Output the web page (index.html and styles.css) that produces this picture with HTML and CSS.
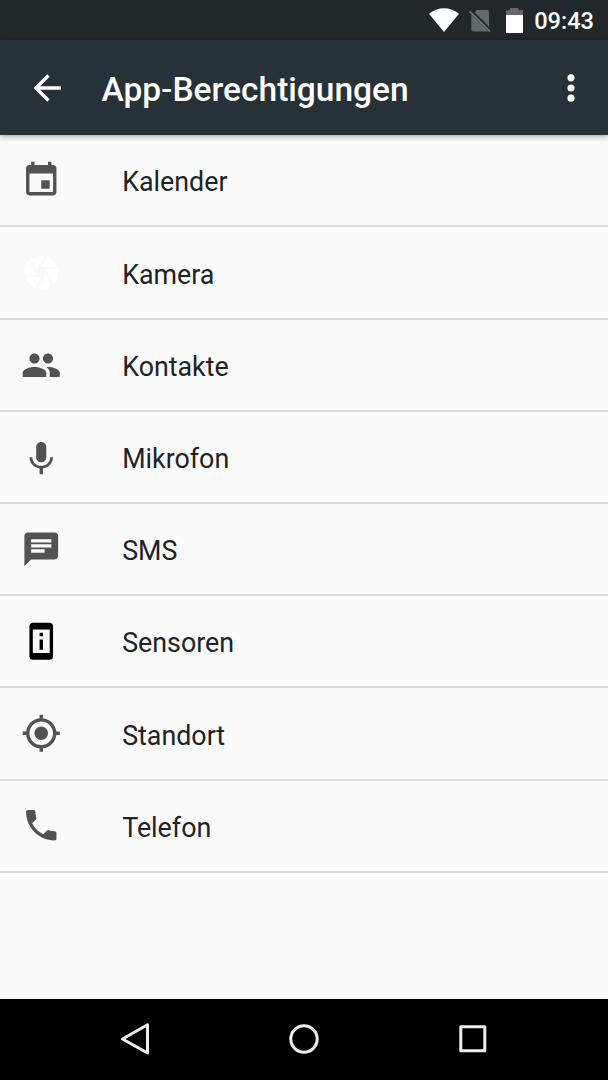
FILE: index.html
```html
<!DOCTYPE html>
<html lang="de">
<head>
  <meta charset="UTF-8">
  <title>App-Berechtigungen</title>
  <link rel="stylesheet" href="styles.css">
</head>
<body>
  <div class="statusbar">
    <svg class="wifi" width="30" height="24" viewBox="0 0 30 24"><path d="M0 5.8C8.500-1.700 21.500-1.700 30 5.800L15 24z"/></svg>
    <svg class="sim" width="22" height="24" viewBox="0 0 22 24">
      <path d="M7.500 1H17.800Q20 1 20 3.200V17.700L5.800 3.500zM2.300 5.500L19 22.200Q18.500 22.500 17.800 22.500H4.500Q2.300 22.500 2.300 20.300z"/>
      <path d="M.7 2.300L21 22.700" class="slash"/>
    </svg>
    <svg class="battery" width="17" height="25" viewBox="0 0 17 25">
      <path d="M0 2.200h4V0h8.500v2.200H17V8H0z" class="empty"/>
      <path d="M0 7h17v18H0z"/>
    </svg>
    <span class="clock">09:43</span>
  </div>

  <header class="toolbar">
    <svg class="back" width="28" height="28" viewBox="0 0 28 28"><path d="M27 14H2.500M14.500 1.500L2 14l12.500 12.500"/></svg>
    <h1>App-Berechtigungen</h1>
    <svg class="more" width="8" height="28" viewBox="0 0 8 28"><circle cx="4" cy="3.800" r="3.600"/><circle cx="4" cy="14" r="3.600"/><circle cx="4" cy="24.200" r="3.600"/></svg>
  </header>

  <ul class="permissions">
    <li>
      <svg class="icon" viewBox="0 0 24 24"><path d="M17 12h-5v5h5v-5zM16 1v2H8V1H6v2H5c-1.110 0-1.990.9-1.990 2L3 19c0 1.100.89 2 2 2h14c1.100 0 2-.9 2-2V5c0-1.100-.9-2-2-2h-1V1h-2zm3 18H5V8h14v11z"/></svg>
      <span>Kalender</span>
    </li>
    <li>
      <svg class="icon light" viewBox="0 0 24 24"><path d="M9.400 10.500l4.770-8.260C13.470 2.090 12.750 2 12 2c-2.400 0-4.600.85-6.320 2.250l3.660 6.350.06-.1zM21.540 9c-.92-2.920-3.150-5.260-6-6.340L11.880 9h9.660zm.26 1h-7.490l.29.5 4.760 8.250C21 16.970 22 14.610 22 12c0-.69-.07-1.350-.2-2zM8.540 12l-3.900-6.750C3.010 7.030 2 9.390 2 12c0 .69.07 1.350.2 2h7.490l-1.150-2zm-6.080 3c.92 2.920 3.150 5.260 6 6.340L12.120 15H2.460zm11.270 0l-3.900 6.760c.7.15 1.420.24 2.170.24 2.400 0 4.600-.85 6.320-2.250l-3.660-6.350-.93 1.600z"/></svg>
      <span>Kamera</span>
    </li>
    <li>
      <svg class="icon" viewBox="0 0 24 24"><path d="M16 11c1.660 0 2.990-1.340 2.990-3S17.660 5 16 5c-1.660 0-3 1.340-3 3s1.340 3 3 3zm-8 0c1.660 0 2.990-1.340 2.990-3S9.660 5 8 5C6.340 5 5 6.340 5 8s1.340 3 3 3zm0 2c-2.330 0-7 1.170-7 3.500V19h14v-2.500c0-2.330-4.670-3.500-7-3.500zm8 0c-.29 0-.62.020-.97.050 1.160.84 1.970 1.970 1.970 3.450V19h6v-2.500c0-2.330-4.670-3.500-7-3.500z"/></svg>
      <span>Kontakte</span>
    </li>
    <li>
      <svg class="icon" viewBox="0 -1 24 24"><path d="M12 14c1.660 0 2.990-1.340 2.990-3L15 5c0-1.660-1.340-3-3-3S9 3.340 9 5v6c0 1.660 1.340 3 3 3zm5.300-3c0 3-2.540 5.100-5.300 5.100S6.700 14 6.700 11H5c0 3.410 2.720 6.230 6 6.720V21h2v-3.280c3.280-.48 6-3.300 6-6.720h-1.700z"/></svg>
      <span>Mikrofon</span>
    </li>
    <li>
      <svg class="icon" viewBox="0 0 24 24"><path d="M20 2H4c-1.100 0-1.990.9-1.990 2L2 22l4-4h14c1.100 0 2-.9 2-2V4c0-1.100-.9-2-2-2zM6 9h12v2H6V9zm8 5H6v-2h8v2zm4-6H6V6h12v2z"/></svg>
      <span>SMS</span>
    </li>
    <li>
      <svg class="icon dark" viewBox="0 0 24 24"><path d="M13 7h-2v2h2V7zm0 4h-2v6h2v-6zm4-9.990L7 1c-1.100 0-2 .9-2 2v18c0 1.100.9 2 2 2h10c1.100 0 2-.9 2-2V3c0-1.100-.9-1.990-2-1.990zM17 19H7V5h10v14z"/></svg>
      <span>Sensoren</span>
    </li>
    <li>
      <svg class="icon" viewBox="0 0 24 24"><path d="M12 8c-2.210 0-4 1.790-4 4s1.790 4 4 4 4-1.790 4-4-1.790-4-4-4zm8.940 3c-.46-4.170-3.770-7.480-7.940-7.940V1h-2v2.060C6.830 3.520 3.520 6.830 3.060 11H1v2h2.060c.46 4.170 3.770 7.480 7.940 7.940V23h2v-2.060c4.170-.46 7.480-3.770 7.940-7.940H23v-2h-2.060zM12 19c-3.870 0-7-3.130-7-7s3.130-7 7-7 7 3.130 7 7-3.130 7-7 7z"/></svg>
      <span>Standort</span>
    </li>
    <li>
      <svg class="icon" viewBox="0 0 24 24"><path d="M6.620 10.790c1.440 2.830 3.760 5.140 6.590 6.590l2.200-2.200c.27-.27.67-.36 1.020-.24 1.120.37 2.330.57 3.570.57.55 0 1 .45 1 1V20c0 .55-.45 1-1 1-9.390 0-17-7.610-17-17 0-.55.45-1 1-1h3.500c.55 0 1 .45 1 1 0 1.250.2 2.450.57 3.570.11.35.030.74-.25 1.020l-2.200 2.200z"/></svg>
      <span>Telefon</span>
    </li>
  </ul>

  <nav class="navbar">
    <svg width="34" height="34" viewBox="0 0 34 34"><path d="M4.500 17L29.500 2.800V31z"/></svg>
    <svg width="34" height="34" viewBox="0 0 34 34"><circle cx="17" cy="17" r="13.200"/></svg>
    <svg width="34" height="34" viewBox="0 0 34 34"><rect x="4.800" y="4.800" width="24" height="24"/></svg>
  </nav>
</body>
</html>
```
FILE: styles.css
```css
body {
  margin: 0;
  height: 1080px;
  display: flex;
  flex-direction: column;
  overflow: hidden;
  font-family: Roboto, "Noto Sans", sans-serif;
  background-color: #fafafa;
  color: #1d2327;
}

svg {
  display: block;
  flex: none;
}

/* Status bar */
.statusbar {
  display: flex;
  justify-content: flex-end;
  align-items: center;
  box-sizing: border-box;
  height: 40px;
  padding-right: 14px;
  background-color: #20282b;
  color: white;
  fill: white;
}
.sim {
  margin-left: 10px;
  margin-top: 1px;
  fill: #646869;
}
.slash {
  stroke: #777a7b;
  stroke-width: 1.8;
}
.battery {
  margin-left: 15px;
}
.empty {
  fill: #646869;
}
.clock {
  margin-left: 11px;
  padding-top: 2px;
  font-size: 23.6px;
  font-weight: 500;
}

/* App bar */
.toolbar {
  display: flex;
  align-items: center;
  box-sizing: border-box;
  height: 95px;
  padding: 0 33px;
  background-color: #263238;
  color: white;
  box-shadow: 0 1px 6px rgba(0, 0, 0, 0.4);
}
.toolbar h1 {
  flex: 1;
  margin: 3px 0 0 39.5px;
  font-size: 33.5px;
  font-weight: 500;
}
.back {
  margin-left: 1px;
  fill: none;
  stroke: white;
  stroke-width: 3.4;
}
.more {
  fill: white;
}

/* Permission list */
.permissions {
  flex: 1;
  margin: 0;
  padding: 0.3px 0 0;
  list-style: none;
}
.permissions li {
  display: flex;
  align-items: center;
  box-sizing: border-box;
  height: 92.2px;
  padding-left: 20.7px;
  border-bottom: 2px solid #dadada;
  font-size: 26.8px;
}
.permissions span {
  margin-left: 61px;
  padding-top: 4px;
}
.icon {
  width: 40.5px;
  height: 40.5px;
  fill: #515351;
}
.light {
  fill: white;
}
.dark {
  fill: black;
}

/* Navigation buttons */
.navbar {
  display: flex;
  justify-content: center;
  align-items: center;
  gap: 135px;
  height: 80px;
  padding-bottom: 1px;
  background-color: black;
  fill: none;
  stroke: #eee;
  stroke-width: 3;
  stroke-linejoin: round;
}
```
